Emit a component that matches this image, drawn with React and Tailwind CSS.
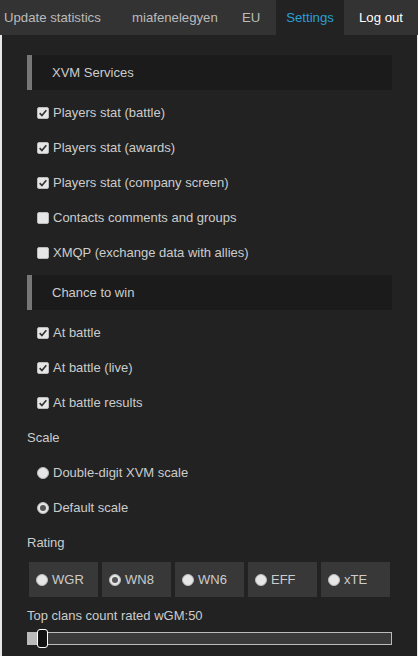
import { useState } from 'react'

const xvm = [
  { label: 'Players stat (battle)', on: true },
  { label: 'Players stat (awards)', on: true },
  { label: 'Players stat (company screen)', on: true },
  { label: 'Contacts comments and groups', on: false },
  { label: 'XMQP (exchange data with allies)', on: false },
]

const chance = [
  { label: 'At battle', on: true },
  { label: 'At battle (live)', on: true },
  { label: 'At battle results', on: true },
]

function Check({ on }) {
  return (
    <span className="flex h-[12px] w-[12px] shrink-0 items-center justify-center rounded-[2px] border border-[#bbb] bg-[#e6e6e6]">
      {on && (
        <svg viewBox="0 0 12 12" className="h-[10px] w-[10px]">
          <path d="M2 6.2 L4.7 9 L10 2.6" fill="none" stroke="#333" strokeWidth="2" />
        </svg>
      )}
    </span>
  )
}

function Radio({ on }) {
  return (
    <span className="flex h-[12px] w-[12px] shrink-0 items-center justify-center rounded-full border border-[#bbb] bg-[#e6e6e6]">
      {on && <span className="h-[6px] w-[6px] rounded-full bg-[#555]" />}
    </span>
  )
}

function Header({ children }) {
  return (
    <div className="my-[5px] flex h-[35px] items-center border-l-[5px] border-[#777] bg-[#1b1b1b] pl-[20px] text-[#ccc]">
      {children}
    </div>
  )
}

function Row({ children }) {
  return <div className="flex h-[35px] items-center gap-[4px] pl-[10px]">{children}</div>
}

export default function App() {
  const [rating] = useState('WN8')

  return (
    <div
      className="flex h-[656px] w-[418px] flex-col overflow-hidden bg-[#e8e8e8] text-[13px]"
      style={{ fontFamily: '"Liberation Sans", Arial, sans-serif' }}
    >
      <nav className="flex h-[35px] shrink-0 items-center bg-[#333] text-[13.2px] text-[#bbb]">
        <span className="w-[117px] pl-[4px]">Update statistics</span>
        <span className="w-[112px] pl-[15px]">miafenelegyen</span>
        <span className="w-[47px] pl-[13px]">EU</span>
        <span className="flex h-full w-[68px] items-center justify-center bg-[#222] text-[#2a9fd6]">Settings</span>
        <span className="flex h-full w-[74px] items-center justify-center text-white">Log out</span>
      </nav>

      <div className="ml-[2px] mr-[1px] flex-1 bg-[#222] px-[25px] pt-[15px] text-[#ccc]">
        <Header>XVM Services</Header>
        {xvm.map((item) => (
          <Row key={item.label}>
            <Check on={item.on} />
            <span>{item.label}</span>
          </Row>
        ))}

        <Header>Chance to win</Header>
        {chance.map((item) => (
          <Row key={item.label}>
            <Check on={item.on} />
            <span>{item.label}</span>
          </Row>
        ))}

        <div className="flex h-[35px] items-center">Scale</div>
        <Row>
          <Radio on={false} />
          <span>Double-digit XVM scale</span>
        </Row>
        <Row>
          <Radio on />
          <span>Default scale</span>
        </Row>

        <div className="flex h-[35px] items-center">Rating</div>
        <div className="mt-[2px] flex gap-[4px] pl-[2px]">
          {['WGR', 'WN8', 'WN6', 'EFF', 'xTE'].map((r) => (
            <div key={r} className="flex h-[35px] w-[69px] items-center gap-[4px] bg-[#383838] pl-[7px]">
              <Radio on={r === rating} />
              <span>{r}</span>
            </div>
          ))}
        </div>

        <div className="mt-[7px] flex h-[24px] items-center">Top clans count rated wGM:50</div>
        <div className="relative mt-[4px] h-[13px] w-[365px] border border-[#bbb] bg-[#3a3a3a]">
          <div className="h-full w-[10px] bg-[#bbb]" />
          <div className="absolute left-[9px] top-[-4px] h-[19px] w-[11px] rounded-[3px] border border-white bg-[#111]" />
        </div>
      </div>
    </div>
  )
}
